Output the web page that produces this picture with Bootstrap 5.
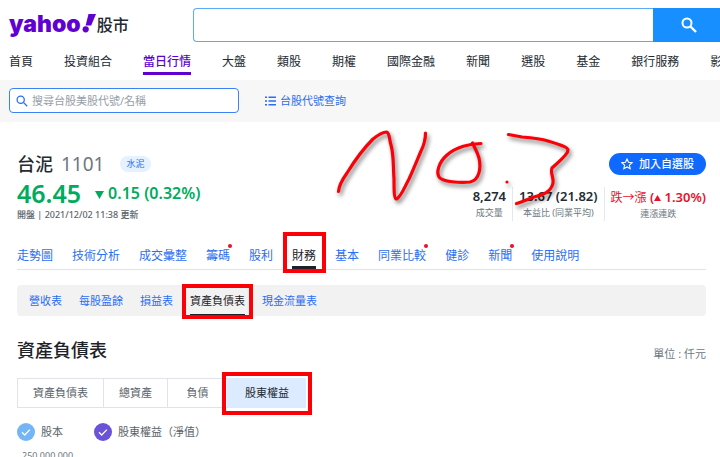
<!DOCTYPE html>
<html lang="zh-Hant">
<head>
<meta charset="utf-8">
<meta name="viewport" content="width=device-width, initial-scale=1">
<title>台泥 1101 資產負債表 - Yahoo股市</title>
<link href="https://cdn.jsdelivr.net/npm/bootstrap@5.3.0/dist/css/bootstrap.min.css" rel="stylesheet">
<style>
  :root { --ink:#232a31; --link:#2b6ef2; --grey:#6e7780; --mark-red:#fb0007; --up:#eb0f29; --down:#00ab5e; }
  body { font-family:"Noto Sans","Noto Sans CJK TC",sans-serif; font-size:12px; line-height:16px; color:var(--ink); background:#fff; height:100vh; overflow:hidden; position:relative; }
  a { text-decoration:none; white-space:nowrap; }
  .top-bar { padding:8px 0 0 9px; height:43px; }
  .brand { width:184px; color:var(--ink); font-size:16px; line-height:34px; font-weight:500; }
  .brand-name { font-family:Inter,sans-serif; font-weight:900; font-size:23px; line-height:32px; color:#6001d2; }
  .site-search { height:34px; }
  .site-search input { min-width:0; border:1px solid #5cabf7; border-right:0; border-radius:4px 0 0 4px; outline:0; }
  .site-search button { width:67px; background:#188fff; border:0; padding:0 0 0 5px; }
  .main-nav { padding:10px 0 5px 9px; gap:31px; overflow:hidden; }
  .main-nav a { color:var(--ink); line-height:17px; padding-bottom:2px; border-bottom:3px solid transparent; }
  .main-nav a.active { color:#6001d2; font-weight:500; border-color:#6001d2; }
  .finder { background:#f7f7f7; padding:8px 9px 9px; gap:26px; font-size:11px; }
  .finder label { width:230px; height:25px; background:#fff; border:1px solid #3b82f6; border-radius:4px; padding:0 6px; gap:4px; }
  .finder input { min-width:0; border:0; outline:0; padding:0; background:transparent; }
  .finder input::placeholder { color:#979ea8; }
  .finder a { color:var(--link); gap:4px; }
  .page { padding:31px 14px 0 17px; }
  .page h1 { font-size:18px; line-height:22px; font-weight:500; }
  .code { font-size:19px; line-height:22px; color:var(--grey); }
  .tag { font-size:9px; line-height:16px; padding:0 6px; color:var(--link); background:#e5f1fe; border-radius:8px; }
  .follow { height:22px; width:97px; background:#0f69ff; color:#fff; border:0; border-radius:11px; font-size:11px; font-weight:500; gap:6px; }
  .quote { color:var(--down); font-weight:600; gap:14px; line-height:32px; padding-top:2px; }
  .price { font-size:25px; }
  .change { font-size:16px; }
  .stamp { font-size:9px; line-height:12px; color:#5b636a; font-weight:500; }
  .stats > div { padding:0 6px; border-left:1px solid #e5e8eb; text-align:center; white-space:nowrap; }
  .stats > div:first-child { border-left:0; }
  .stats > div:last-child { padding-right:0; }
  .stats dt { font-size:13px; line-height:19px; font-weight:600; }
  .stats dd { font-size:9px; line-height:14px; color:var(--grey); margin:0; }
  .rise { color:var(--up); }
  .streak { font-family:"Noto Sans CJK TC",sans-serif; font-size:12px; font-weight:400; }
  .tabs { gap:19px; border-bottom:1px solid #e0e4e9; padding-top:25px; }
  .tabs a { color:var(--link); line-height:20px; border-bottom:3px solid transparent; position:relative; }
  .tabs a.active, .subtabs a.active { color:#1d2228; border-color:#1d2228; }
  .fresh::after { content:""; position:absolute; right:-2px; top:-2px; width:4px; height:4px; border-radius:50%; background:var(--up); }
  .subtabs { gap:17px; background:#f2f2f2; border-radius:4px; margin-top:15px; padding:0 12px; font-size:11px; }
  .subtabs a { color:var(--link); line-height:26px; padding-top:3px; border-bottom:2px solid transparent; position:relative; }
  .boxed::before { content:""; position:absolute; border:4px solid var(--mark-red); z-index:2; }
  .tabs .boxed::before { inset:-14px -10px -7px -9px; }
  .subtabs .boxed::before { inset:-1px -8px -5px -8px; }
  .choices .boxed::before { inset:-7px -6px -8px -6px; }
  .page h2 { font-size:18px; line-height:24px; font-weight:500; color:#1d2228; }
  .balance-head { padding-top:22px; }
  .unit { font-size:11px; color:var(--grey); padding-top:8px; }
  .choices button { height:30px; min-width:60px; padding:0 15px; font-size:11px; line-height:16px; color:#5b636a; background:#fff; border:1px solid #e0e4e9; border-right:0; position:relative; }
  .choices button.active { background:#dcebff; border-color:#dcebff; color:var(--ink); padding:0 17px; }
  .legend-row { font-size:11px; color:#5b636a; gap:31px; margin-top:15px; }
  .legend-row label { gap:6px; }
  .legend-row input { appearance:none; width:18px; height:18px; margin:0; border-radius:50%; background:#73b5f5 url("data:image/svg+xml,%3Csvg xmlns='http://www.w3.org/2000/svg' viewBox='0 0 18 18'%3E%3Cpath d='M5 9.3l2.7 2.7 5.2-5.4' fill='none' stroke='%23fff' stroke-width='1.3'/%3E%3C/svg%3E"); }
  .legend-row input.equity { background-color:#6a52d9; }
  .axis { font-size:9px; line-height:12px; color:var(--grey); padding-left:5px; margin-top:9px; }
  .ink-note { position:absolute; left:320px; top:120px; z-index:3; pointer-events:none; filter:drop-shadow(2px 3px 2px rgba(0,0,0,.5)); }
</style>
<script src="https://cdn.jsdelivr.net/npm/bootstrap@5.3.0/dist/js/bootstrap.bundle.min.js"></script>
</head>
<body>
<header>
  <div class="top-bar d-flex">
    <a class="brand d-flex flex-shrink-0" href="#"><span class="brand-name">yahoo</span>
      <svg class="mt-1" width="16" height="24" viewBox="0 0 16 24" aria-hidden="true"><path d="M7.5 2H15L10.2 13.5H4.6z" fill="#6001d2"/><circle cx="4.7" cy="17.3" r="3.1" fill="#6001d2"/></svg><span>股市</span></a>
    <form class="site-search d-flex flex-grow-1">
      <input class="flex-grow-1" type="text" aria-label="搜尋">
      <button type="submit" aria-label="送出搜尋"><svg width="18" height="18" viewBox="0 0 18 18" fill="none" stroke="#fff" stroke-width="2"><circle cx="7" cy="7" r="4.5"/><path d="M10.5 10.5l5.5 5.5" stroke-width="2.4"/></svg></button>
    </form>
  </div>
  <nav class="main-nav d-flex">
    <a href="#">首頁</a><a href="#">投資組合</a><a href="#" class="active">當日行情</a><a href="#">大盤</a><a href="#">類股</a><a href="#">期權</a><a href="#">國際金融</a><a href="#">新聞</a><a href="#">選股</a><a href="#">基金</a><a href="#">銀行服務</a><a href="#">影音</a>
  </nav>
  <div class="finder d-flex align-items-center">
    <label class="d-flex align-items-center"><svg width="12" height="12" viewBox="0 0 12 12" fill="none" stroke="#2b6ef2" stroke-width="1.3"><circle cx="4.7" cy="4.7" r="3.6"/><path d="M7.4 7.4l3.8 3.8"/></svg><input class="flex-grow-1" type="text" placeholder="搜尋台股美股代號/名稱" aria-label="搜尋台股美股代號或名稱"></label>
    <a class="d-flex align-items-center" href="#"><svg width="11" height="10" viewBox="0 0 11 10" stroke="#2b6ef2" stroke-width="1.4"><path d="M0 1.2h2M0 5h2M0 8.8h2M3.5 1.2H11M3.5 5H11M3.5 8.8H11"/></svg>台股代號查詢</a>
  </div>
</header>
<main class="page">
  <div class="d-flex align-items-center">
    <h1 class="m-0">台泥</h1><span class="code ms-2">1101</span><span class="tag ms-3">水泥</span>
    <button class="follow btn p-0 ms-auto d-flex align-items-center justify-content-center"><svg width="12" height="12" viewBox="0 0 12 12" fill="none" stroke="#fff" stroke-width="1.1"><path d="M6 1l1.5 3.3 3.6.4-2.7 2.4.8 3.6L6 8.9l-3.2 1.8.8-3.6L.9 4.7l3.6-.4z"/></svg>加入自選股</button>
  </div>
  <div class="d-flex justify-content-between">
    <div>
      <div class="quote d-flex"><span class="price">46.45</span><span class="change"><svg class="me-1" width="9" height="8" viewBox="0 0 9 8" aria-hidden="true"><path d="M0 0h9L4.500 8z" fill="#00ab5e"/></svg>0.15 (0.32%)</span></div>
      <div class="stamp">開盤 | 2021/12/02 11:38 更新</div>
    </div>
    <dl class="stats d-flex m-0 pt-2 mt-1">
      <div><dt>8,274</dt><dd>成交量</dd></div>
      <div><dt>13.67 (21.82)</dt><dd>本益比 (同業平均)</dd></div>
      <div><dt class="rise"><span class="streak">跌→漲</span> (<svg width="7" height="6" viewBox="0 0 7 6" aria-hidden="true"><path d="M3.500 0L7 6H0z" fill="#eb0f29"/></svg> 1.30%)</dt><dd>連漲連跌</dd></div>
    </dl>
  </div>
  <nav class="tabs d-flex">
    <a href="#">走勢圖</a><a href="#">技術分析</a><a href="#">成交彙整</a><a href="#" class="fresh">籌碼</a><a href="#">股利</a><a href="#" class="active boxed">財務</a><a href="#">基本</a><a href="#" class="fresh">同業比較</a><a href="#">健診</a><a href="#" class="fresh">新聞</a><a href="#">使用說明</a>
  </nav>
  <nav class="subtabs d-flex">
    <a href="#">營收表</a><a href="#">每股盈餘</a><a href="#">損益表</a><a href="#" class="active boxed">資產負債表</a><a href="#">現金流量表</a>
  </nav>
  <div class="balance-head d-flex justify-content-between align-items-center">
    <h2 class="m-0">資產負債表</h2><span class="unit">單位 : 仟元</span>
  </div>
  <div class="choices d-flex pt-3">
    <button type="button">資產負債表</button><button type="button">總資產</button><button type="button">負債</button><button type="button" class="active boxed">股東權益</button>
  </div>
  <div class="legend-row d-flex">
    <label class="d-flex align-items-center"><input type="checkbox" checked>股本</label>
    <label class="d-flex align-items-center"><input class="equity" type="checkbox" checked>股東權益（淨值）</label>
  </div>
  <div class="axis">250,000,000</div>
</main>
<svg class="ink-note" width="260" height="100" viewBox="0 0 260 100" fill="none" stroke="#fb0007" stroke-width="3.200" stroke-linecap="round" stroke-linejoin="round" aria-label="No.3">
  <path d="M18.500 71.500C19 65 22 60 27 53C35 40 44 28 53 19C58 15 63 12 66.500 12C70 13 69 19 71 25C74 36 73 47 74 59C74 70 74 79 76.500 79C81 77 84 68 89 59C94 48 98 38 101 31C104 25 105.500 18 105.500 13"/>
  <path d="M161 23.500C150 23.500 136 27 127 35C119 42 116 52 119 57C122 62 141 63 150 62C160 60 161 47 159 38C157 31 154 27 152.500 23"/>
  <circle cx="187" cy="62" r="1.600" fill="#fb0007" stroke="none"/>
  <path d="M188.500 14.500L202 17C214 18 220 18.500 228 21C238 24 248 27 248 30C248 35 237 43 232 48C230 53 234 58 233 63C231 73 221 75 214 77C208 79 202 82 196.500 83.500"/>
</svg>
</body>
</html>
